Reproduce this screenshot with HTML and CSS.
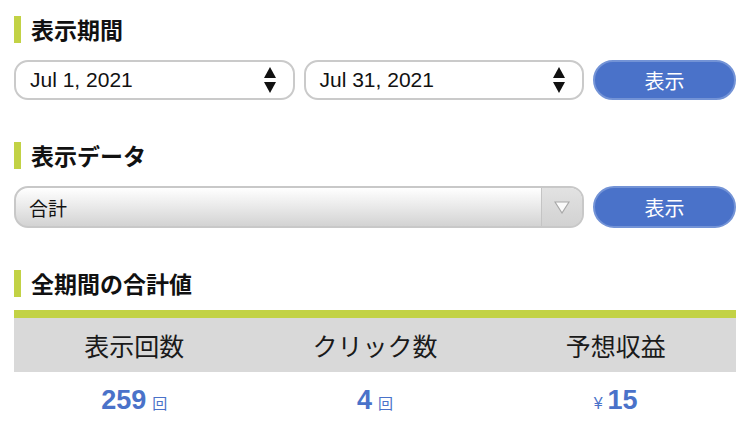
FILE: index.html
```html
<!DOCTYPE html>
<html lang="ja">
<head>
    <meta charset="UTF-8">
    <meta name="viewport" content="width=device-width, initial-scale=1.0">
    <title>レポート</title>
    <link rel="stylesheet" href="styles.css">
</head>
<body>
    <!-- 表示期間 -->
    <h2 class="section-title">表示期間</h2>
    <div class="form-row">
        <div class="date-box">
            <span>Jul 1, 2021</span>
            <svg class="spinner" width="12" height="26" viewBox="0 0 12 26">
                <path d="M6 0 L12 11 L0 11 Z" fill="#111"/>
                <path d="M0 15 L12 15 L6 26 Z" fill="#111"/>
            </svg>
        </div>
        <div class="date-box">
            <span>Jul 31, 2021</span>
            <svg class="spinner" width="12" height="26" viewBox="0 0 12 26">
                <path d="M6 0 L12 11 L0 11 Z" fill="#111"/>
                <path d="M0 15 L12 15 L6 26 Z" fill="#111"/>
            </svg>
        </div>
        <button class="show-button">表示</button>
    </div>

    <!-- 表示データ -->
    <h2 class="section-title">表示データ</h2>
    <div class="form-row">
        <div class="select-box">
            <span class="select-label">合計</span>
            <span class="select-arrow">
                <svg width="16" height="13" viewBox="0 0 16 13">
                    <path d="M1 1 L15 1 L8 12 Z" fill="#fafafa" stroke="#a8a8a8" stroke-width="1.2"/>
                </svg>
            </span>
        </div>
        <button class="show-button">表示</button>
    </div>

    <!-- 全期間の合計値 -->
    <h2 class="section-title">全期間の合計値</h2>
    <div class="totals">
        <div class="totals-head">
            <div>表示回数</div>
            <div>クリック数</div>
            <div>予想収益</div>
        </div>
        <div class="totals-values">
            <div><span class="num">259</span><span class="unit">回</span></div>
            <div><span class="num">4</span><span class="unit">回</span></div>
            <div><span class="yen">¥</span><span class="num">15</span></div>
        </div>
    </div>
</body>
</html>
```

FILE: styles.css
```css
body {
    margin: 0;
    padding: 0 14px;
    background: #fff;
    color: #111;
    font-family: "Liberation Sans", "Noto Sans CJK JP", sans-serif;
}

/* 見出し */
.section-title {
    margin: 16px 0 17px;
    padding-left: 10px;
    border-left: 7px solid #c2d245;
    font-family: "Noto Sans CJK JP", sans-serif;
    font-size: 23px;
    font-weight: bold;
    line-height: 27px;
}

.form-row {
    display: flex;
    gap: 9px;
    margin-bottom: 42px;
}

.date-box {
    flex: 1;
    display: flex;
    align-items: center;
    justify-content: space-between;
    height: 40px;
    box-sizing: border-box;
    padding: 0 17px 0 14px;
    border: 2px solid #cacaca;
    border-radius: 14px;
    font-size: 21px;
    color: #111;
}

.select-box {
    flex: 1;
    display: flex;
    align-items: stretch;
    height: 42px;
    box-sizing: border-box;
    border: 2px solid #c8c8c8;
    border-radius: 14px;
    overflow: hidden;
    background: linear-gradient(#ffffff, #d3d3d3);
}

.select-label {
    flex: 1;
    display: flex;
    align-items: center;
    padding-left: 13px;
    font-family: "Noto Sans CJK JP", sans-serif;
    font-size: 19px;
    color: #111;
}

.select-arrow {
    width: 40px;
    display: flex;
    align-items: center;
    justify-content: center;
    border-left: 1px solid #c4c4c4;
    background: linear-gradient(#e2e2e2, #d2d2d2);
}

.show-button {
    width: 143px;
    box-sizing: border-box;
    border: 2px solid #7393d6;
    border-radius: 22px;
    background: #4a72c9;
    color: #fff;
    font-family: "Noto Sans CJK JP", sans-serif;
    font-size: 20px;
    padding: 0;
}

/* 合計値テーブル */
.totals {
    border-top: 8px solid #c2d245;
    margin-top: -4px;
}

.totals-head,
.totals-values {
    display: grid;
    grid-template-columns: 1fr 1fr 1fr;
    text-align: center;
    align-items: center;
}

.totals-head {
    height: 54px;
    background: #d9d9d9;
    font-family: "Noto Sans CJK JP", sans-serif;
    font-size: 25px;
    color: #1a1a1a;
}

.totals-values {
    height: 56px;
    color: #4a72c9;
}

.num {
    font-size: 27px;
    font-weight: bold;
}

.unit {
    font-family: "Noto Sans CJK JP", sans-serif;
    font-size: 15px;
    margin-left: 6px;
}

.yen {
    font-size: 16px;
    margin-right: 5px;
}
```
